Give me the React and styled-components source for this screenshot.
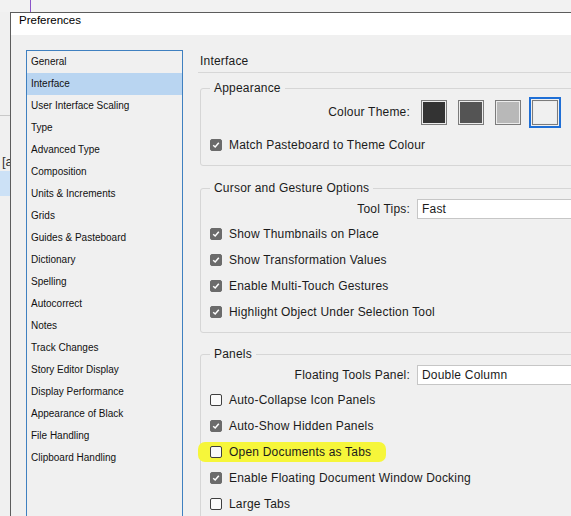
import React from "react";
import styled, { createGlobalStyle } from "styled-components";

const GlobalStyle = createGlobalStyle`
  html, body {
    margin: 0;
    padding: 0;
    background: #f0f0f0;
    overflow: hidden;
  }
  body {
    font-family: "Liberation Sans", Arial, sans-serif;
    color: #1b1b1b;
  }
`;

const Screen = styled.div`
  width: 571px;
  height: 516px;
  overflow: hidden;
  display: grid;
  grid-template-columns: 10px 1fr;
  grid-template-rows: 12px 1fr;
  background: #f0f0f0;
`;

const TopStrip = styled.div`
  grid-column: 1 / -1;
  display: flex;
  background: #f2f2f2;
`;

const PurpleLine = styled.div`
  width: 1px;
  height: 12px;
  margin-left: 30px;
  background: #8b55c9;
`;

const LeftStrip = styled.div`
  display: flex;
  flex-direction: column;
  overflow: hidden;
  background: #f0f0f0;
`;

const StripRule = styled.div`
  height: 1px;
  margin-top: 103px;
  background: #c9c9c9;
`;

const StripText = styled.div`
  margin-top: 38px;
  padding-left: 2px;
  font-size: 13px;
  line-height: 15px;
  color: #333;
  white-space: nowrap;
`;

const StripBand = styled.div`
  height: 25px;
  margin-top: 2px;
  background: #cce1f6;
`;

const Dialog = styled.div`
  width: 640px;
  min-height: 0;
  display: flex;
  flex-direction: column;
  border-left: 1px solid #5c5c5c;
  border-top: 1px solid #5c5c5c;
  background: #f0f0f0;
  overflow: hidden;
`;

const TitleBar = styled.div`
  flex-shrink: 0;
  height: 22px;
  padding-left: 8px;
  background: #ffffff;
  font-size: 11.5px;
  line-height: 14px;
  color: #000;
`;

const Body = styled.div`
  flex: 1;
  flex-shrink: 0;
  display: flex;
  gap: 15px;
  padding: 15px 0 0 15px;
`;

const CategoryList = styled.div`
  width: 157px;
  height: 520px;
  flex-shrink: 0;
  box-sizing: border-box;
  border: 1px solid #3f80c0;
  background: #f0f0f0;
`;

const CategoryItem = styled.div`
  height: 22px;
  line-height: 22px;
  padding-left: 4px;
  font-size: 10px;
  color: #111;
  white-space: nowrap;
  background: ${(p) => (p.$selected ? "#b9d5f1" : "transparent")};
`;

const Main = styled.div`
  flex: 1;
  display: flex;
  flex-direction: column;
`;

const Heading = styled.div`
  flex-shrink: 0;
  height: 22px;
  line-height: 22px;
  padding-left: 2px;
  font-size: 12px;
  letter-spacing: 0.2px;
  border-bottom: 1px solid #d7d7d7;
`;

const Group = styled.fieldset`
  flex-shrink: 0;
  margin: ${(p) => p.$top}px 0 0 2px;
  padding: 3px 0 7px 9px;
  min-width: 0;
  border: 1px solid #d6d6d6;
  border-radius: 3px;
`;

const Legend = styled.legend`
  padding: 0 4px;
  font-size: 12px;
  line-height: 14px;
  letter-spacing: 0.2px;
`;

const FieldRow = styled.div`
  display: flex;
  align-items: center;
  height: ${(p) => p.$h || 22}px;
  margin-bottom: ${(p) => p.$gap || 0}px;
`;

const FieldLabel = styled.div`
  width: 200px;
  text-align: right;
  font-size: 12px;
  letter-spacing: 0.2px;
  white-space: nowrap;
`;

const Swatches = styled.div`
  display: flex;
  gap: 11px;
  margin-left: 11px;
`;

const Swatch = styled.div`
  width: 26px;
  height: 25px;
  box-sizing: border-box;
  border: 1px solid #7b7b7b;
  box-shadow: inset 0 0 0 1px #ececec;
  background: ${(p) => p.$color};
  outline: ${(p) => (p.$active ? "2px solid #1f6fd6" : "none")};
  outline-offset: 1px;
`;

const Select = styled.div`
  width: 230px;
  height: 20px;
  margin-left: 7px;
  box-sizing: border-box;
  border: 1px solid #c6c6c6;
  background: #ffffff;
  padding-left: 4px;
  font-size: 12px;
  letter-spacing: 0.2px;
  line-height: 18px;
`;

const CheckRow = styled.div`
  display: flex;
  align-items: center;
  height: 26px;
`;

const Highlight = styled.div`
  display: flex;
  align-items: center;
  gap: 7px;
  height: 20px;
  margin-left: -12px;
  padding: 0 15px 0 12px;
  border-radius: 7px;
  background: ${(p) => (p.$on ? "#f6f63a" : "transparent")};
`;

const Box = styled.div`
  width: 12px;
  height: 12px;
  box-sizing: border-box;
  border-radius: 2px;
  display: flex;
  align-items: center;
  justify-content: center;
  border: 1px solid ${(p) => (p.$checked ? "#6b6b6b" : "#3f3f3f")};
  background: ${(p) => (p.$checked ? "#6b6b6b" : "#fbfbfb")};
`;

const CheckText = styled.span`
  font-size: 12px;
  letter-spacing: 0.2px;
  white-space: nowrap;
`;

const categories = [
  "General",
  "Interface",
  "User Interface Scaling",
  "Type",
  "Advanced Type",
  "Composition",
  "Units & Increments",
  "Grids",
  "Guides & Pasteboard",
  "Dictionary",
  "Spelling",
  "Autocorrect",
  "Notes",
  "Track Changes",
  "Story Editor Display",
  "Display Performance",
  "Appearance of Black",
  "File Handling",
  "Clipboard Handling",
];

const themes = ["#333333", "#545454", "#b8b8b8", "#f0f0f0"];

const Check = ({ checked, label, highlight }) => (
  <CheckRow>
    <Highlight $on={highlight}>
      <Box $checked={checked}>
        {checked && (
          <svg width="8" height="8" viewBox="0 0 8 8">
            <path d="M1.2 4.2 L3.2 6 L6.8 1.8" fill="none" stroke="#fff" strokeWidth="1.5" />
          </svg>
        )}
      </Box>
      <CheckText>{label}</CheckText>
    </Highlight>
  </CheckRow>
);

export default function App() {
  return (
    <Screen>
      <GlobalStyle />
      <TopStrip>
        <PurpleLine />
      </TopStrip>
      <LeftStrip>
        <StripRule />
        <StripText>[a</StripText>
        <StripBand />
      </LeftStrip>
      <Dialog>
        <TitleBar>Preferences</TitleBar>
        <Body>
          <CategoryList>
            {categories.map((c) => (
              <CategoryItem key={c} $selected={c === "Interface"}>
                {c}
              </CategoryItem>
            ))}
          </CategoryList>
          <Main>
            <Heading>Interface</Heading>

            <Group $top={8}>
              <Legend>Appearance</Legend>
              <FieldRow $h={28} $gap={6}>
                <FieldLabel>Colour Theme:</FieldLabel>
                <Swatches>
                  {themes.map((t, i) => (
                    <Swatch key={t} $color={t} $active={i === 3} />
                  ))}
                </Swatches>
              </FieldRow>
              <Check checked label="Match Pasteboard to Theme Colour" />
            </Group>

            <Group $top={15}>
              <Legend>Cursor and Gesture Options</Legend>
              <FieldRow $gap={1}>
                <FieldLabel>Tool Tips:</FieldLabel>
                <Select>Fast</Select>
              </FieldRow>
              <Check checked label="Show Thumbnails on Place" />
              <Check checked label="Show Transformation Values" />
              <Check checked label="Enable Multi-Touch Gestures" />
              <Check checked label="Highlight Object Under Selection Tool" />
            </Group>

            <Group $top={14}>
              <Legend>Panels</Legend>
              <FieldRow $gap={1}>
                <FieldLabel>Floating Tools Panel:</FieldLabel>
                <Select>Double Column</Select>
              </FieldRow>
              <Check label="Auto-Collapse Icon Panels" />
              <Check checked label="Auto-Show Hidden Panels" />
              <Check label="Open Documents as Tabs" highlight />
              <Check checked label="Enable Floating Document Window Docking" />
              <Check label="Large Tabs" />
            </Group>
          </Main>
        </Body>
      </Dialog>
    </Screen>
  );
}
